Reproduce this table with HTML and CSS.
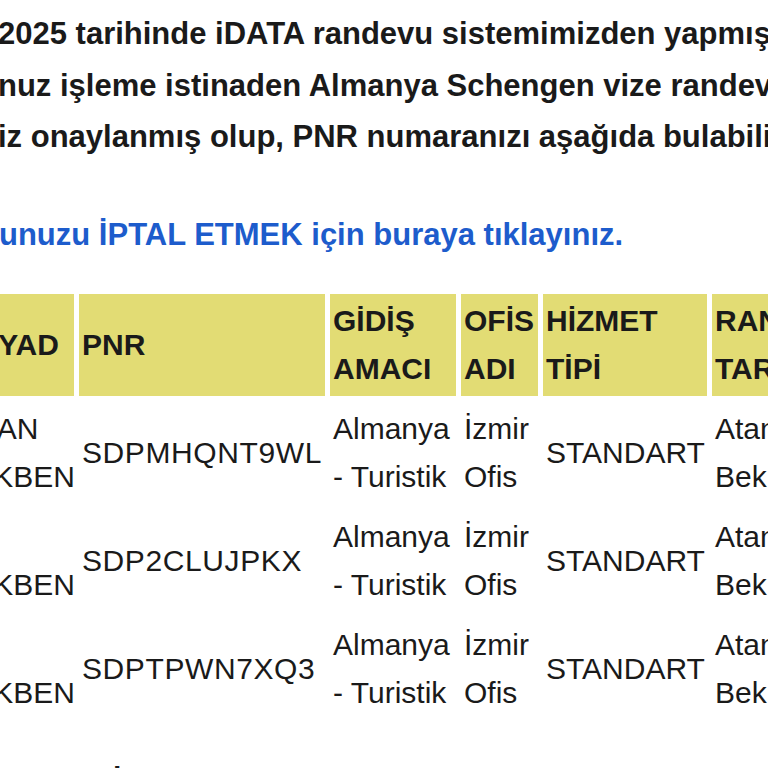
FILE: index.html
```html
<!DOCTYPE html>
<html lang="tr">
<head>
<meta charset="utf-8">
<title>Randevu Bilgisi</title>
<link rel="stylesheet" href="styles.css">
</head>
<body>
<main class="mail">
  <div class="intro">
    <p class="line">2025 tarihinde iDATA randevu sistemimizden yapmış</p>
    <p class="line">nuz işleme istinaden Almanya Schengen vize randevunuz</p>
    <p class="line">iz onaylanmış olup, PNR numaranızı aşağıda bulabilirsiniz.</p>
  </div>
  <p class="cancel"><a href="#">unuzu İPTAL ETMEK için buraya tıklayınız.</a></p>

  <table class="appts">
    <colgroup>
      <col class="c-name">
      <col class="c-pnr">
      <col class="c-purpose">
      <col class="c-office">
      <col class="c-service">
      <col class="c-date">
    </colgroup>
    <thead>
      <tr>
        <th>SOYAD</th>
        <th>PNR</th>
        <th>GİDİŞ AMACI</th>
        <th>OFİS ADI</th>
        <th>HİZMET TİPİ</th>
        <th>RANDEVU TARİHİ</th>
      </tr>
    </thead>
    <tbody>
      <tr>
        <td>OZAN TEKBEN</td>
        <td class="pnr">SDPMHQNT9WL</td>
        <td>Almanya - Turistik</td>
        <td>İzmir Ofis</td>
        <td>STANDART</td>
        <td>Atanmayı Bekliyor</td>
      </tr>
      <tr>
        <td>ALİ TEKBEN</td>
        <td class="pnr">SDP2CLUJPKX</td>
        <td>Almanya - Turistik</td>
        <td>İzmir Ofis</td>
        <td>STANDART</td>
        <td>Atanmayı Bekliyor</td>
      </tr>
      <tr>
        <td>ALİ TEKBEN</td>
        <td class="pnr">SDPTPWN7XQ3</td>
        <td>Almanya - Turistik</td>
        <td>İzmir Ofis</td>
        <td>STANDART</td>
        <td>Atanmayı Bekliyor</td>
      </tr>
    </tbody>
  </table>

  <p class="closing">İyi günler dileriz.</p>
</main>
</body>
</html>
```

FILE: styles.css
```css
html, body {
  margin: 0;
  padding: 0;
  background: #ffffff;
}

body {
  width: 768px;
  height: 768px;
  overflow: hidden;
  font-family: "Liberation Sans", Arial, Helvetica, sans-serif;
  color: #1a1a1a;
}

.mail {
  width: 768px;
}

.intro {
  padding-top: 8px;
}

.line {
  margin: 0 0 0 -2px;
  font-size: 31px;
  font-weight: 700;
  line-height: 51.5px;
  white-space: nowrap;
}

.cancel {
  margin: 46px 0 0 -1px;
  font-size: 31px;
  font-weight: 700;
  line-height: 51px;
  white-space: nowrap;
}

.cancel a {
  color: #1d5ccc;
  text-decoration: none;
}

.appts {
  margin: 28px 0 0 -53px;
  table-layout: fixed;
  width: 970px;
  border-collapse: separate;
  border-spacing: 5px 6px;
  font-size: 30px;
  line-height: 48px;
}

.c-name { width: 122px; }
.c-pnr { width: 246px; }
.c-purpose { width: 126px; }
.c-office { width: 77px; }
.c-service { width: 164px; }
.c-date { width: 200px; }

.appts th,
.appts td {
  box-sizing: border-box;
  padding: 3px 2px 3px 3px;
  text-align: left;
  vertical-align: middle;
}

.appts th {
  background: #e2dc74;
  font-weight: 700;
  color: #1a1a1a;
}

.appts td {
  font-weight: 400;
  color: #1a1a1a;
}

.appts .pnr {
  letter-spacing: 0.6px;
}

.closing {
  margin: 29px 0 0 0;
  padding-left: 113px;
  font-size: 30px;
  font-weight: 700;
  line-height: 51px;
  white-space: nowrap;
}
```
